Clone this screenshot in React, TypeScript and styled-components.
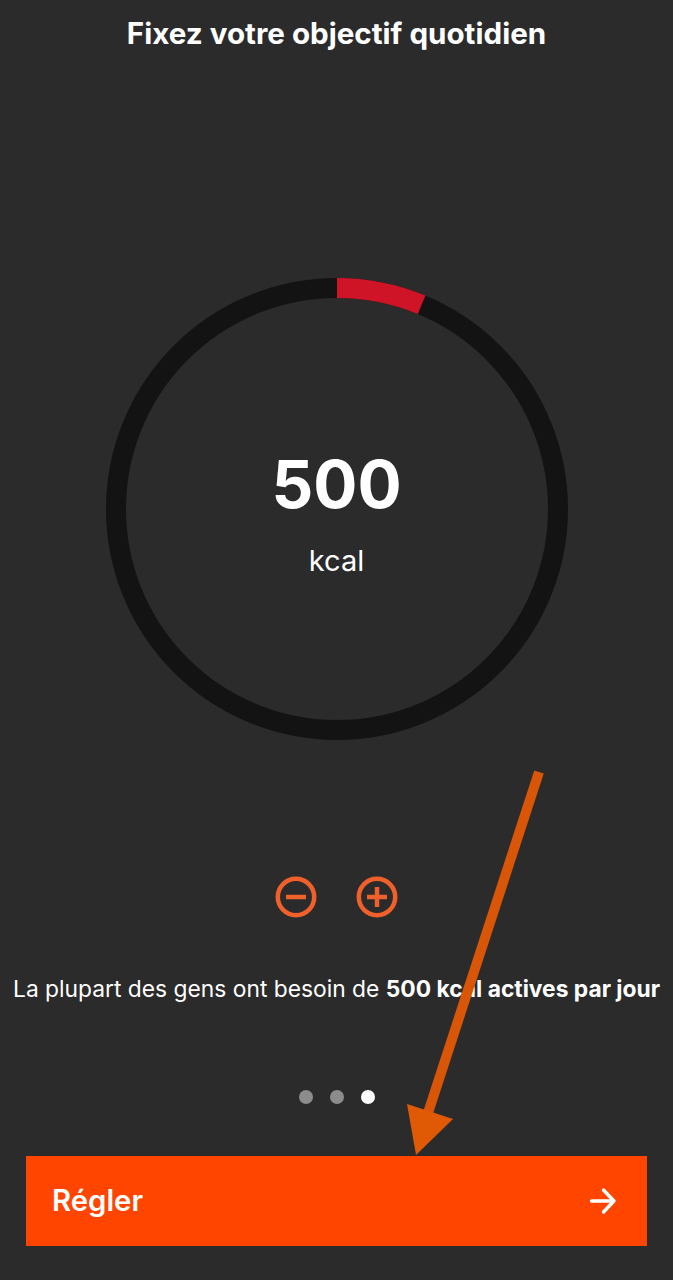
import React from "react";
import styled, { createGlobalStyle } from "styled-components";

const GlobalStyle = createGlobalStyle`
  html, body {
    margin: 0;
    padding: 0;
    background: #2b2b2b;
  }
  body {
    font-family: Inter, "Liberation Sans", sans-serif;
    color: #fff;
  }
`;

const Screen = styled.main`
  position: relative;
  width: 673px;
  height: 1280px;
  overflow: hidden;
  background: #2b2b2b;
  display: flex;
  flex-direction: column;
  align-items: center;
`;

const Title = styled.h1`
  margin: 0;
  padding-top: 16px;
  height: 278px;
  box-sizing: border-box;
  font-size: 29.6px;
  line-height: 34px;
  font-weight: 700;
  white-space: nowrap;
`;

const RingWrap = styled.div`
  display: grid;
  width: 462px;
  height: 462px;
  place-items: center;

  & > * {
    grid-area: 1 / 1;
  }
`;

const RingValue = styled.div`
  display: flex;
  flex-direction: column;
  align-items: center;
  padding-top: 10px;
`;

const Value = styled.span`
  font-size: 65.5px;
  line-height: 72px;
  font-weight: 700;
`;

const Unit = styled.span`
  margin-top: 22px;
  font-size: 29px;
  line-height: 36px;
  font-weight: 400;
`;

const Steppers = styled.div`
  display: flex;
  gap: 39px;
  margin-top: 136px;
`;

const StepButton = styled.button`
  width: 42px;
  height: 42px;
  padding: 0;
  border: 0;
  background: none;
  display: block;
`;

const Hint = styled.p`
  margin: 56px 0 0;
  font-size: 22.8px;
  line-height: 30px;
  font-weight: 400;
  white-space: nowrap;

  strong {
    font-weight: 700;
  }
`;

const Dots = styled.div`
  display: flex;
  gap: 17px;
  margin-top: 86px;
`;

const Dot = styled.span<{ $active?: boolean }>`
  width: 14px;
  height: 14px;
  border-radius: 50%;
  background: ${(p) => (p.$active ? "#ffffff" : "#8c8c8c")};
`;

const PrimaryButton = styled.button`
  margin-top: 52px;
  width: 621px;
  height: 90px;
  padding: 0 30px 2px 26px;
  border: 0;
  background: #ff4500;
  color: #fff;
  display: flex;
  align-items: center;
  justify-content: space-between;
  font-family: inherit;
  font-size: 29.3px;
  font-weight: 600;

  svg {
    margin-top: 2px;
  }
`;

const ArrowOverlay = styled.svg`
  position: absolute;
  left: 0;
  top: 0;
  pointer-events: none;
`;

const Ring = () => (
  <svg width="462" height="462" viewBox="0 0 462 462">
    <circle cx="231" cy="231" r="221" fill="none" stroke="#131313" strokeWidth="20" />
    <path
      d="M231 10 A221 221 0 0 1 315.6 26.8"
      fill="none"
      stroke="#d01428"
      strokeWidth="20"
    />
  </svg>
);

const MinusIcon = () => (
  <svg width="42" height="42" viewBox="0 0 42 42" fill="none" stroke="#f0602a" strokeWidth="4.5">
    <circle cx="21" cy="21" r="18.2" />
    <path d="M11 21H31" />
  </svg>
);

const PlusIcon = () => (
  <svg width="42" height="42" viewBox="0 0 42 42" fill="none" stroke="#f0602a" strokeWidth="4.5">
    <circle cx="21" cy="21" r="18.2" />
    <path d="M11 21H31M21 11V31" />
  </svg>
);

const ArrowRight = () => (
  <svg width="28" height="28" viewBox="0 0 28 28" fill="none" stroke="#fff" strokeWidth="3.4" strokeLinecap="round" strokeLinejoin="round">
    <path d="M2.5 14H25M14.5 3L25 14L14.5 25" />
  </svg>
);

export default function App() {
  return (
    <>
      <GlobalStyle />
      <Screen>
        <Title>Fixez votre objectif quotidien</Title>
        <RingWrap>
          <Ring />
          <RingValue>
            <Value>500</Value>
            <Unit>kcal</Unit>
          </RingValue>
        </RingWrap>
        <Steppers>
          <StepButton aria-label="Moins">
            <MinusIcon />
          </StepButton>
          <StepButton aria-label="Plus">
            <PlusIcon />
          </StepButton>
        </Steppers>
        <Hint>
          La plupart des gens ont besoin de <strong>500 kcal actives par jour</strong>
        </Hint>
        <Dots>
          <Dot />
          <Dot />
          <Dot $active />
        </Dots>
        <PrimaryButton>
          Régler
          <ArrowRight />
        </PrimaryButton>
        <ArrowOverlay width="673" height="1280" viewBox="0 0 673 1280">
          <path d="M539 772L427 1116" stroke="#d95508" strokeWidth="10" fill="none" />
          <path d="M407 1104L453 1119L416 1155Z" fill="#e05a06" />
        </ArrowOverlay>
      </Screen>
    </>
  );
}
